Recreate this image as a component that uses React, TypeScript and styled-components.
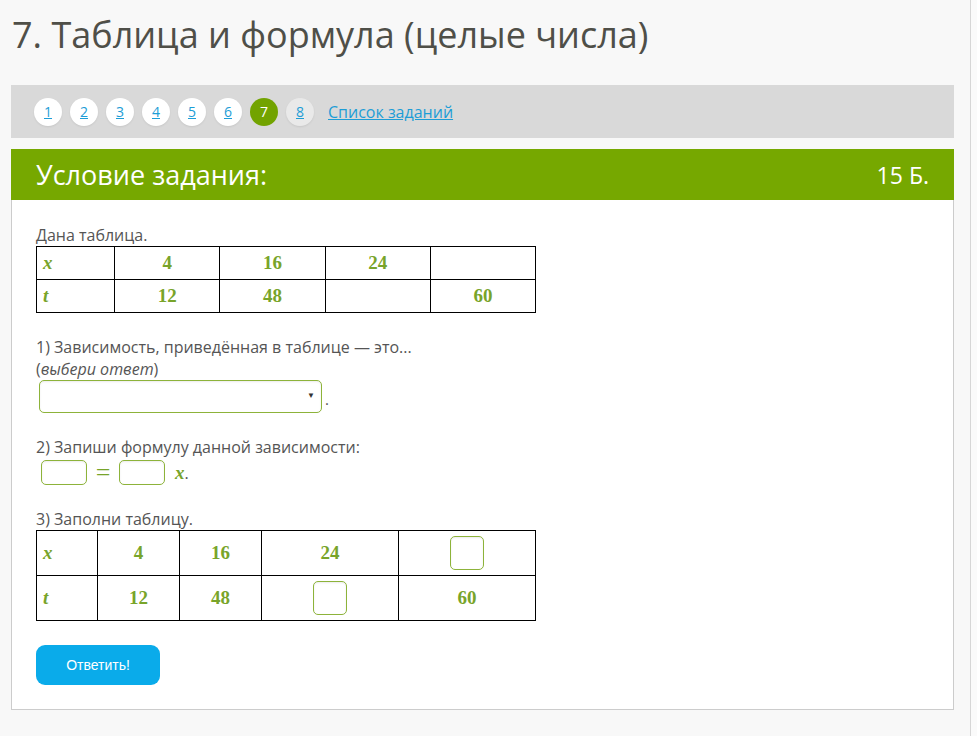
import styled, { createGlobalStyle } from "styled-components";

const GlobalStyle = createGlobalStyle`
  html, body {
    margin: 0;
    padding: 0;
    background: #f8f8f8;
  }
  body {
    font-family: "Open Sans", "Liberation Sans", sans-serif;
    color: #555;
  }
`;

const PAGES = ["1", "2", "3", "4", "5", "6", "7", "8"];
const CURRENT = "7";

type Cell = string | null;

const GIVEN: Cell[][] = [
  ["x", "4", "16", "24", ""],
  ["t", "12", "48", "", "60"],
];

const FILL: Cell[][] = [
  ["x", "4", "16", "24", null],
  ["t", "12", "48", null, "60"],
];

type GridProps = { widths: number[]; row: number; data: Cell[][] };

const Grid: React.FC<GridProps> = ({ widths, row, data }) => (
  <Table $row={row}>
    <colgroup>
      {widths.map((w, i) => (
        <col key={i} style={{ width: w }} />
      ))}
    </colgroup>
    <tbody>
      {data.map((cells, r) => (
        <tr key={r}>
          {cells.map((c, i) => (
            <Td key={i} $var={i === 0}>
              {c === null ? <CellInput /> : c}
            </Td>
          ))}
        </tr>
      ))}
    </tbody>
  </Table>
);

export default function App() {
  return (
    <>
      <GlobalStyle />
      <Page>
        <Main>
          <Title>7. Таблица и формула (целые числа)</Title>
          <Pager>
            {PAGES.map((p) => (
              <PageDot key={p} $active={p === CURRENT} $visited={p === "8"}>
                {p === CURRENT ? p : <a href="#">{p}</a>}
              </PageDot>
            ))}
            <ListLink href="#">Список заданий</ListLink>
          </Pager>
          <Card>
            <CardHead>
              <span>Условие задания:</span>
              <Points>15 Б.</Points>
            </CardHead>
            <CardBody>
              <Para>Дана таблица.</Para>
              <Grid widths={[78, 105, 105, 105, 105]} row={33} data={GIVEN} />

              <Question>
                <Para>1) Зависимость, приведённая в таблице — это...</Para>
                <Para>
                  (<em>выбери ответ</em>)
                </Para>
                <InlineRow>
                  <Select>
                    <Arrow>▼</Arrow>
                  </Select>
                  <span>.</span>
                </InlineRow>
              </Question>

              <Question>
                <Para>2) Запиши формулу данной зависимости:</Para>
                <FormulaRow>
                  <SmallInput />
                  <Eq>=</Eq>
                  <SmallInput />
                  <Var>x</Var>
                  <span>.</span>
                </FormulaRow>
              </Question>

              <Question>
                <Para>3) Заполни таблицу.</Para>
                <Grid widths={[61, 82, 82, 137, 137]} row={45} data={FILL} />
              </Question>

              <Submit>Ответить!</Submit>
            </CardBody>
          </Card>
        </Main>
        <Gutter />
      </Page>
    </>
  );
}

/* -------------------------------------------------------------------------- */
/*                                   STYLES                                   */
/* -------------------------------------------------------------------------- */

const Page = styled.div`
  display: flex;
  min-height: 736px;
`;

const Main = styled.div`
  width: 944px;
  margin-left: 11px;
`;

const Gutter = styled.div`
  margin-left: 16px;
  width: 6px;
  border-left: 1px solid #d6d6d6;
  background: #fafafa;
`;

const Title = styled.h1`
  margin: 0;
  padding: 10px 0 0 1px;
  height: 85px;
  box-sizing: border-box;
  font-family: "Open Sans", sans-serif;
  font-weight: 400;
  font-size: 36px;
  color: #4f4f48;
  line-height: 50px;
`;

const Pager = styled.div`
  height: 53px;
  background: #d9d9d9;
  display: flex;
  align-items: center;
  padding-left: 23px;
  gap: 8px;
`;

const PageDot = styled.span<{ $active: boolean; $visited: boolean }>`
  width: 28px;
  height: 28px;
  border-radius: 50%;
  display: flex;
  align-items: center;
  justify-content: center;
  font-size: 14px;
  background: ${(p) => (p.$active ? "#72a300" : p.$visited ? "#e9e9e9" : "#fff")};
  color: #fff;
  box-shadow: ${(p) => (p.$active ? "none" : "0 1px 2px rgba(0,0,0,0.08)")};

  a {
    color: #1d9dd6;
  }
`;

const ListLink = styled.a`
  margin-left: 6px;
  font-size: 16px;
  color: #1d9dd6;
`;

const Card = styled.div`
  margin-top: 11px;
  border: 1px solid #cccccc;
  border-top: none;
  background: #fff;
`;

const CardHead = styled.div`
  height: 51px;
  margin: 0 -1px;
  background: #76a800;
  color: #fff;
  display: flex;
  align-items: center;
  justify-content: space-between;
  padding: 0 25px;
  font-size: 27px;
`;

const Points = styled.span`
  font-size: 23px;
`;

const CardBody = styled.div`
  padding: 24px;
`;

const Para = styled.div`
  font-size: 16px;
  line-height: 22px;
  color: #555;

  em {
    font-style: italic;
  }
`;

const Table = styled.table<{ $row: number }>`
  border-collapse: collapse;
  table-layout: fixed;
  width: 500px;

  td {
    height: ${(p) => p.$row - 1}px;
  }
`;

const Td = styled.td<{ $var: boolean }>`
  border: 1px solid #000;
  padding: 0 6px;
  text-align: ${(p) => (p.$var ? "left" : "center")};
  font-family: "Liberation Serif", "DejaVu Serif", serif;
  font-style: ${(p) => (p.$var ? "italic" : "normal")};
  font-weight: 700;
  font-size: 19px;
  color: #78a42a;
  vertical-align: middle;
`;

const Question = styled.div`
  margin-top: 23px;
`;

const InlineRow = styled.div`
  display: flex;
  align-items: flex-end;
  gap: 3px;
  margin-left: 3px;
  font-size: 15px;

  span {
    margin-bottom: 4px;
  }
`;

const Select = styled.div`
  width: 283px;
  height: 33px;
  box-sizing: border-box;
  border: 1px solid #8db33a;
  border-radius: 5px;
  box-shadow: inset 0 1px 2px rgba(0, 0, 0, 0.08);
  display: flex;
  align-items: center;
  justify-content: flex-end;
  padding-right: 6px;
`;

const Arrow = styled.span`
  font-size: 8px;
  color: #333;
`;

const FormulaRow = styled.div`
  display: flex;
  align-items: center;
  margin-top: 2px;
  margin-left: 5px;
  font-size: 16px;
`;

const SmallInput = styled.div`
  width: 46px;
  height: 25px;
  box-sizing: border-box;
  border: 1px solid #8db33a;
  border-radius: 5px;
  box-shadow: inset 0 1px 2px rgba(0, 0, 0, 0.08);
`;

const Eq = styled.span`
  width: 32px;
  text-align: center;
  font-family: "Liberation Serif", serif;
  font-size: 26px;
  line-height: 20px;
  color: #78a42a;
`;

const Var = styled.span`
  margin-left: 10px;
  font-family: "Liberation Serif", serif;
  font-style: italic;
  font-weight: 700;
  font-size: 19px;
  color: #78a42a;
`;

const CellInput = styled.div`
  display: inline-block;
  width: 34px;
  height: 34px;
  box-sizing: border-box;
  border: 1px solid #8db33a;
  border-radius: 5px;
  box-shadow: inset 0 1px 2px rgba(0, 0, 0, 0.08);
  vertical-align: middle;
`;

const Submit = styled.button`
  display: block;
  margin-top: 24px;
  width: 124px;
  height: 40px;
  border: none;
  border-radius: 9px;
  background: #0aabea;
  color: #fff;
  font-family: "Liberation Sans", Arial, sans-serif;
  font-size: 14px;
  cursor: pointer;
`;
